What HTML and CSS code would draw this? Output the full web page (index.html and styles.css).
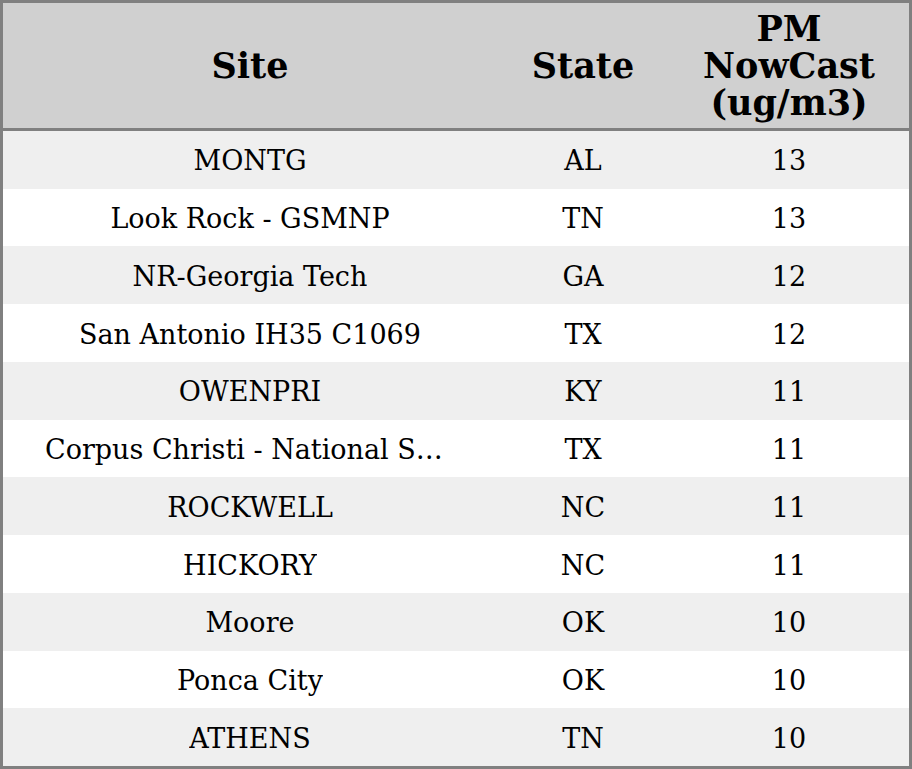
FILE: index.html
```html
<!DOCTYPE html>
<html>
<head>
<meta charset="utf-8">
<link rel="stylesheet" href="styles.css">
</head>
<body>
<div class="table">
  <div class="head">
    <div class="cell c-site">Site</div>
    <div class="cell c-state">State</div>
    <div class="cell c-pm">PM<br>NowCast<br>(ug/m3)</div>
  </div>
  <div class="body">
    <div class="row odd"><div class="cell c-site"><span class="clip">MONTG</span></div><div class="cell c-state">AL</div><div class="cell c-pm">13</div></div>
    <div class="row"><div class="cell c-site"><span class="clip">Look Rock - GSMNP</span></div><div class="cell c-state">TN</div><div class="cell c-pm">13</div></div>
    <div class="row odd"><div class="cell c-site"><span class="clip">NR-Georgia Tech</span></div><div class="cell c-state">GA</div><div class="cell c-pm">12</div></div>
    <div class="row"><div class="cell c-site"><span class="clip">San Antonio IH35 C1069</span></div><div class="cell c-state">TX</div><div class="cell c-pm">12</div></div>
    <div class="row odd"><div class="cell c-site"><span class="clip">OWENPRI</span></div><div class="cell c-state">KY</div><div class="cell c-pm">11</div></div>
    <div class="row"><div class="cell c-site"><span class="clip">Corpus Christi - National Seashore</span></div><div class="cell c-state">TX</div><div class="cell c-pm">11</div></div>
    <div class="row odd"><div class="cell c-site"><span class="clip">ROCKWELL</span></div><div class="cell c-state">NC</div><div class="cell c-pm">11</div></div>
    <div class="row"><div class="cell c-site"><span class="clip">HICKORY</span></div><div class="cell c-state">NC</div><div class="cell c-pm">11</div></div>
    <div class="row odd"><div class="cell c-site"><span class="clip">Moore</span></div><div class="cell c-state">OK</div><div class="cell c-pm">10</div></div>
    <div class="row"><div class="cell c-site"><span class="clip">Ponca City</span></div><div class="cell c-state">OK</div><div class="cell c-pm">10</div></div>
    <div class="row odd"><div class="cell c-site"><span class="clip">ATHENS</span></div><div class="cell c-state">TN</div><div class="cell c-pm">10</div></div>
  </div>
</div>
</body>
</html>
```
FILE: styles.css
```css
html, body {
  margin: 0;
  padding: 0;
  height: 100%;
}
body {
  font-family: "DejaVu Serif", serif;
  color: #000;
  background: #fff;
}
.table {
  box-sizing: border-box;
  width: 912px;
  height: 769px;
  border: 3px solid #808080;
  display: flex;
  flex-direction: column;
}
.head {
  height: 125px;
  flex: none;
  display: flex;
  background: #d0d0d0;
  border-bottom: 3px solid #808080;
  font-weight: bold;
  font-size: 35px;
  line-height: 37px;
}
.body {
  flex: 1;
  display: flex;
  flex-direction: column;
  font-size: 27px;
}
.row {
  flex: 1;
  display: flex;
  background: #fff;
}
.row.odd {
  background: #efefef;
}
.cell {
  display: flex;
  align-items: center;
  justify-content: center;
  text-align: center;
  min-width: 0;
}
.row .cell {
  padding-top: 2px;
}
.c-site {
  width: 494px;
  flex: none;
  padding: 0 42px;
  box-sizing: border-box;
}
.c-state {
  width: 172px;
  flex: none;
}
.c-pm {
  flex: 1;
}
.clip {
  white-space: nowrap;
  overflow: hidden;
  text-overflow: ellipsis;
  max-width: 100%;
}
```
